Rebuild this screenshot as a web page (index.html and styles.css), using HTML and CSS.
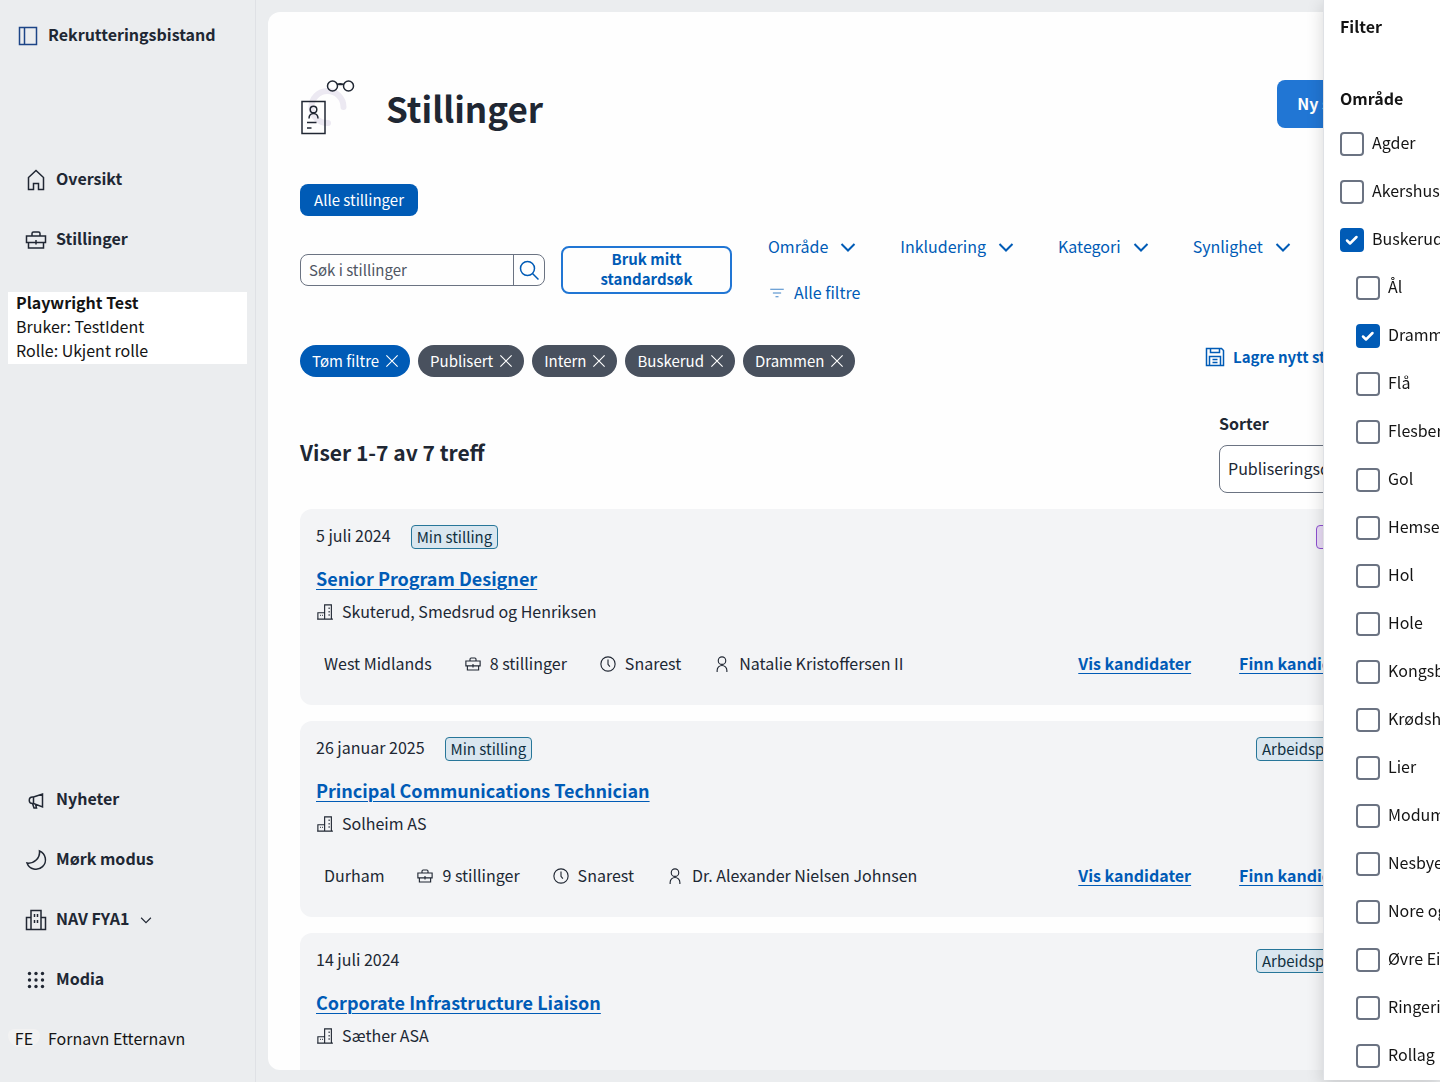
FILE: index.html
```html
<!DOCTYPE html>
<html lang="nb">
<head>
<meta charset="utf-8">
<meta name="viewport" content="width=device-width, initial-scale=1">
<title>Rekrutteringsbistand</title>
<link rel="stylesheet" href="styles.css">
</head>
<body>
<svg class="sprite" aria-hidden="true">
  <symbol id="i-case" viewBox="0 0 24 24"><path d="M2.5 8h19v6.5h-19zM4.5 14.500V20h15v-5.500M8 8V5.500A1.500 1.500 0 0 1 9.500 4h5A1.500 1.500 0 0 1 16 5.500V8M12 12v4.500"/></symbol>
  <symbol id="i-chev" viewBox="0 0 24 24"><path d="M5.500 9l6.500 6.500L18.500 9"/></symbol>
  <symbol id="i-x" viewBox="0 0 24 24"><path d="M4.500 4.500l15 15M19.500 4.500l-15 15"/></symbol>
  <symbol id="i-firm" viewBox="0 0 24 24"><path d="M11.500 13V2.500h9v19h-9M2.500 13h9v8.500h-9zM1.500 21.500h21M17.500 6v2M17.500 10.500v2M17.500 15v2M5.500 16.500h1M8 16.500h1"/></symbol>
  <symbol id="i-clock" viewBox="0 0 24 24"><circle cx="12" cy="12" r="9.500"/><path d="M12 6v6.500l2.500 3"/></symbol>
  <symbol id="i-person" viewBox="0 0 24 24"><circle cx="12" cy="7.500" r="5"/><path d="M5.500 22.500v-2a6.500 6.500 0 0 1 13 0v2"/></symbol>
</svg>

<div class="app">
  <aside class="sidebar">
    <a class="brand" href="#"><svg class="icon24 brand-icon" viewBox="0 0 24 24"><path d="M3.500 3.500h17v17h-17zM8.500 3.500v17"/></svg>Rekrutteringsbistand</a>
    <nav class="nav">
      <a class="nav-item" href="#"><svg class="icon24" viewBox="0 0 24 24"><path d="M4.500 9.500 12 2.500l7.500 7V21.500h-5V15.500h-5v6h-5z"/></svg>Oversikt</a>
      <a class="nav-item" href="#"><svg class="icon24"><use href="#i-case"/></svg>Stillinger</a>
    </nav>
    <div class="user-card"><strong>Playwright Test</strong><span>Bruker: TestIdent</span><span>Rolle: Ukjent rolle</span></div>
    <div class="nav nav-bottom">
      <button class="nav-item" type="button"><svg class="icon24" viewBox="0 0 24 24"><path d="M9.500 9 18.500 6v13L9.500 15.500zM9.500 9H8.500a3 3 0 0 0 0 6.500h1M8.500 15.500l1.500 4.500h2.500l-1-4M9.500 9v6.500"/></svg>Nyheter</button>
      <button class="nav-item" type="button"><svg class="icon24" viewBox="0 0 24 24"><path d="M15.500 3A9.500 9.500 0 1 1 3 15a11 11 0 0 0 12.500-12z"/></svg>Mørk modus</button>
      <button class="nav-item" type="button"><svg class="icon24" viewBox="0 0 24 24"><path d="M7 21.500V2.500h10v19M7 9.500H2.500v12h19v-12H17M10.500 6v3M13.500 6v3M10.500 12v3M13.500 12v3"/></svg>NAV FYA1<svg class="icon18"><use href="#i-chev"/></svg></button>
      <button class="nav-item" type="button"><svg class="icon24" viewBox="0 0 24 24"><g class="dots"><circle cx="5.500" cy="5.500" r="1.700"/><circle cx="12" cy="5.500" r="1.700"/><circle cx="18.500" cy="5.500" r="1.700"/><circle cx="5.500" cy="12" r="1.700"/><circle cx="12" cy="12" r="1.700"/><circle cx="18.500" cy="12" r="1.700"/><circle cx="5.500" cy="18.500" r="1.700"/><circle cx="12" cy="18.500" r="1.700"/><circle cx="18.500" cy="18.500" r="1.700"/></g></svg>Modia</button>
      <div class="profile"><span class="avatar">FE</span>Fornavn Etternavn</div>
    </div>
  </aside>

  <main class="panel">
    <header class="page-head">
      <svg class="hero" viewBox="0 2 56 56"><path class="arc" d="M43.500 29A16 16 0 1 0 28 45"/><rect x="2" y="23.500" width="23" height="32"/><circle cx="13.500" cy="31.500" r="3.300"/><path d="M9 40.500c0-3 2-5 4.500-5s4.500 2 4.500 5M7 44.500h9.500M7 50h4.500"/><circle cx="32.500" cy="8" r="5"/><circle cx="48.500" cy="8" r="5"/><path d="M37 6.500c2-1 4-1 7 0M38.500 6.500h4"/></svg>
      <h1>Stillinger</h1>
      <button class="new-btn" type="button">Ny stilling</button>
    </header>

    <button class="toggle" type="button">Alle stillinger</button>

    <div class="tools">
      <form class="search" role="search">
        <input type="search" placeholder="Søk i stillinger" aria-label="Søk i stillinger">
        <button type="button" aria-label="Søk"><svg class="icon24" viewBox="0 0 24 24"><circle cx="10.500" cy="10.500" r="7"/><path d="M15.500 15.500l6 6"/></svg></button>
      </form>
      <button class="standard" type="button">Bruk mitt standardsøk</button>
      <div class="filters">
        <button type="button">Område<svg class="icon24"><use href="#i-chev"/></svg></button>
        <button type="button">Inkludering<svg class="icon24"><use href="#i-chev"/></svg></button>
        <button type="button">Kategori<svg class="icon24"><use href="#i-chev"/></svg></button>
        <button type="button">Synlighet<svg class="icon24"><use href="#i-chev"/></svg></button>
        <button type="button"><svg class="icon18 thin" viewBox="0 0 24 24"><path d="M3 7h18M6.500 12h11M10 17h4"/></svg>Alle filtre</button>
      </div>
    </div>

    <div class="active">
      <div class="chips">
        <button class="chip chip-clear" type="button">Tøm filtre<svg class="icon18"><use href="#i-x"/></svg></button>
        <button class="chip" type="button">Publisert<svg class="icon18"><use href="#i-x"/></svg></button>
        <button class="chip" type="button">Intern<svg class="icon18"><use href="#i-x"/></svg></button>
        <button class="chip" type="button">Buskerud<svg class="icon18"><use href="#i-x"/></svg></button>
        <button class="chip" type="button">Drammen<svg class="icon18"><use href="#i-x"/></svg></button>
      </div>
      <button class="save" type="button"><svg class="icon24" viewBox="0 0 24 24"><path d="M3.500 3.500h15l2 2v15h-17zM7.500 3.500v4h9v-4M6.500 20.500v-9h11v9M9.500 14.500h5M9.500 17.500h5"/></svg>Lagre nytt standardsøk</button>
    </div>

    <div class="result-head">
      <h2>Viser 1-7 av 7 treff</h2>
      <div class="sort">
        <label for="sort">Sorter</label>
        <select id="sort"><option>Publiseringsdato</option></select>
      </div>
    </div>

    <div class="cards">
      <article class="card">
        <div class="card-top"><span class="date">5 juli 2024</span><span class="tag">Min stilling</span><span class="tag tag-intern">Internt</span></div>
        <h3><a href="#">Senior Program Designer</a></h3>
        <p class="firm"><svg class="icon18"><use href="#i-firm"/></svg>Skuterud, Smedsrud og Henriksen</p>
        <div class="card-foot"><span>West Midlands</span><span><svg class="icon18"><use href="#i-case"/></svg>8 stillinger</span><span><svg class="icon18"><use href="#i-clock"/></svg>Snarest</span><span><svg class="icon18"><use href="#i-person"/></svg>Natalie Kristoffersen II</span><div class="links"><a href="#">Vis kandidater</a><a href="#">Finn kandidater</a></div></div>
      </article>
      <article class="card">
        <div class="card-top"><span class="date">26 januar 2025</span><span class="tag">Min stilling</span><span class="tag tag-end">Arbeidsplassen</span></div>
        <h3><a href="#">Principal Communications Technician</a></h3>
        <p class="firm"><svg class="icon18"><use href="#i-firm"/></svg>Solheim AS</p>
        <div class="card-foot"><span>Durham</span><span><svg class="icon18"><use href="#i-case"/></svg>9 stillinger</span><span><svg class="icon18"><use href="#i-clock"/></svg>Snarest</span><span><svg class="icon18"><use href="#i-person"/></svg>Dr. Alexander Nielsen Johnsen</span><div class="links"><a href="#">Vis kandidater</a><a href="#">Finn kandidater</a></div></div>
      </article>
      <article class="card">
        <div class="card-top"><span class="date">14 juli 2024</span><span class="tag tag-end">Arbeidsplassen</span></div>
        <h3><a href="#">Corporate Infrastructure Liaison</a></h3>
        <p class="firm"><svg class="icon18"><use href="#i-firm"/></svg>Sæther ASA</p>
      </article>
    </div>
  </main>
</div>

<aside class="drawer" aria-label="Filter">
  <h2>Filter</h2>
  <fieldset>
    <legend>Område</legend>
    <label><input type="checkbox">Agder</label>
    <label><input type="checkbox">Akershus</label>
    <label><input type="checkbox" checked>Buskerud</label>
    <div class="sub">
      <label><input type="checkbox">Ål</label>
      <label><input type="checkbox" checked>Drammen</label>
      <label><input type="checkbox">Flå</label>
      <label><input type="checkbox">Flesberg</label>
      <label><input type="checkbox">Gol</label>
      <label><input type="checkbox">Hemsedal</label>
      <label><input type="checkbox">Hol</label>
      <label><input type="checkbox">Hole</label>
      <label><input type="checkbox">Kongsberg</label>
      <label><input type="checkbox">Krødsherad</label>
      <label><input type="checkbox">Lier</label>
      <label><input type="checkbox">Modum</label>
      <label><input type="checkbox">Nesbyen</label>
      <label><input type="checkbox">Nore og Uvdal</label>
      <label><input type="checkbox">Øvre Eiker</label>
      <label><input type="checkbox">Ringerike</label>
      <label><input type="checkbox">Rollag</label>
    </div>
  </fieldset>
</aside>
</body>
</html>
```
FILE: styles.css
```css
:root {
  --ink: #202733;
  --black: #141414;
  --blue: #005bb6;
  --blue-mid: #2176d4;
  --grey: #6b7382;
  --chip: #49515e;
  --page: #ebedef;
}
* { box-sizing: border-box; }
html, body { height: 100%; }
body {
  margin: 0;
  overflow: hidden;
  background: var(--page);
  color: var(--ink);
  font: 16px/24px "Noto Sans CJK JP", "Noto Sans", sans-serif;
}
button, input, select { font: inherit; color: inherit; }
button { border: 0; background: none; padding: 0; cursor: pointer; }
h1, h2, h3, p { margin: 0; }
a { color: inherit; }
svg { flex: none; fill: none; stroke: currentColor; stroke-width: 1.5; }
.sprite { display: none; }
.icon24 { width: 24px; height: 24px; }
.icon18 { width: 18px; height: 18px; }
.dots { fill: currentColor; stroke: none; }

.app { display: flex; height: 100%; }

.sidebar {
  flex: 0 0 256px;
  display: flex;
  flex-direction: column;
  padding: 12px 8px 18px;
  border-right: 1px solid #dfe1e5;
}
/* The text sits slightly above the middle of a row, the icon in the middle. */
.brand, .nav-item, .profile {
  display: flex;
  align-items: center;
  height: 48px;
  gap: 8px;
  padding-bottom: 4px;
}
.brand, .nav-item { font-weight: 700; text-decoration: none; }
.brand svg, .nav-item svg { margin-top: 4px; }
.brand { padding-left: 8px; }
.brand-icon { color: #1c4587; }
.nav { display: flex; flex-direction: column; gap: 12px; padding-left: 16px; margin-top: 96px; }
.user-card {
  display: flex;
  flex-direction: column;
  gap: 4px;
  margin-top: 28px;
  padding: 0 8px 4px;
  background: #fff;
  color: var(--black);
  line-height: 20px;
}
.nav-bottom { margin-top: auto; }
.profile { margin-left: -16px; color: var(--black); }
.avatar {
  display: flex;
  align-items: center;
  justify-content: center;
  width: 32px;
  height: 18px;
  border-radius: 8px 8px 16px 16px;
  background: #f2f2f2;
}

.panel {
  flex: 1;
  min-width: 0;
  overflow: hidden;
  margin: 12px;
  padding: 68px 32px 0;
  border-radius: 12px;
  background: #fefefe;
}
.page-head { display: flex; align-items: flex-start; height: 104px; }
.hero { width: 56px; height: 56px; }
.hero .arc { stroke: #ece9f2; stroke-width: 6; stroke-linecap: round; }
h1 { margin-left: 30px; font-size: 35px; line-height: 56px; }
.new-btn {
  margin-left: auto;
  height: 48px;
  padding: 0 20px 2px;
  border-radius: 8px;
  background: var(--blue-mid);
  color: #fff;
  font-weight: 700;
}
.toggle {
  display: block;
  min-width: 118px;
  height: 32px;
  padding: 0 12px;
  border-radius: 8px;
  background: var(--blue);
  color: #fff;
  font-size: 15px;
}
.tools { display: flex; align-items: center; gap: 16px; margin-top: 8px; }
.search {
  flex: 0 0 245px;
  display: flex;
  height: 32px;
  border: 1px solid var(--grey);
  border-radius: 8px;
  overflow: hidden;
}
.search input { flex: 1; min-width: 0; border: 0; padding: 0 8px; background: none; font-size: 15px; }
.search input::placeholder { color: #4f5663; opacity: 1; }
.search button { width: 31px; border-left: 1px solid var(--grey); color: var(--blue); line-height: 0; }
.standard {
  flex: 0 0 171px;
  height: 48px;
  padding: 0 20px 2px;
  border: 2px solid var(--blue-mid);
  border-radius: 8px;
  color: var(--blue);
  font-size: 15px;
  line-height: 20px;
  font-weight: 700;
}
.filters { flex: 1; display: flex; flex-wrap: wrap; color: var(--blue); }
.filters button { display: flex; align-items: center; gap: 8px; height: 46px; padding: 0 20px 2px; }
.filters svg { margin-top: 2px; stroke-width: 2; }
.filters .thin { stroke-width: 1; }

.active { display: flex; justify-content: space-between; align-items: flex-start; margin-top: 21px; }
.chips { display: flex; gap: 8px; padding-top: 8px; }
.chip {
  display: flex;
  align-items: center;
  gap: 4px;
  height: 32px;
  padding: 0 9px 0 12px;
  border-radius: 16px;
  background: var(--chip);
  color: #fff;
  font-size: 15px;
}
.chip-clear { background: var(--blue); }
.save {
  display: flex;
  align-items: center;
  gap: 6px;
  width: 193px;
  height: 40px;
  color: var(--blue);
  font-size: 15px;
  font-weight: 700;
  white-space: nowrap;
}

.result-head { display: flex; justify-content: space-between; align-items: center; margin-top: 34px; }
h2 { font-size: 21px; line-height: 32px; }
.sort { width: 177px; }
.sort label { display: block; margin-bottom: 10px; font-weight: 700; }
.sort select {
  display: block;
  width: 100%;
  height: 48px;
  padding: 0 8px 2px;
  border: 1px solid var(--grey);
  border-radius: 8px;
  background: #fff;
  appearance: none;
}

.cards { display: flex; flex-direction: column; gap: 16px; margin-top: 16px; }
.card { min-height: 196px; padding: 16px; border-radius: 12px; background: #f3f4f6; }
.card-top { display: flex; gap: 20px; height: 24px; }
.date { line-height: 20px; }
.tag {
  height: 24px;
  padding: 0 5px;
  border: 1px solid #277699;
  border-radius: 4px;
  background: #d9e6ef;
  color: #10303f;
  font-size: 15px;
  line-height: 22px;
}
.tag-intern { min-width: 64px; margin-left: auto; border-color: #8e4fd1; background: #e9dcf6; }
.tag-end { min-width: 124px; margin-left: auto; }
h3 { margin-top: 15px; font-size: 18px; line-height: 28px; }
h3 a, .links a { color: var(--blue); text-underline-offset: 3px; text-decoration-thickness: 1px; }
.card .icon18 { margin-top: 2px; }
.firm { display: flex; align-items: center; gap: 8px; margin-top: 7px; }
.card-foot { display: flex; align-items: center; gap: 32px; margin-top: 28px; padding-left: 8px; }
.card-foot span { display: flex; align-items: center; gap: 8px; }
.links { display: flex; gap: 48px; margin-left: auto; padding-right: 16px; font-weight: 700; }

.drawer {
  position: fixed;
  top: 0;
  right: 0;
  bottom: 2px;
  width: 117px;
  overflow: hidden;
  padding: 10px 0 0 16px;
  border-left: 1px solid #dfe1e5;
  background: #fff;
  color: var(--black);
  white-space: nowrap;
  box-shadow: 0 4px 16px rgb(0 0 0 / 16%);
}
.drawer h2 { font-size: 16px; line-height: 32px; }
.drawer fieldset { margin: 0; padding: 0; border: 0; min-width: 0; }
.drawer legend { padding: 44px 0 10px; font-weight: 700; }
.drawer label { display: flex; align-items: center; gap: 8px; height: 48px; padding-bottom: 4px; }
.sub { padding-left: 16px; }
.drawer input {
  appearance: none;
  flex: none;
  width: 24px;
  height: 24px;
  margin: 4px 0 0;
  border: 2px solid var(--grey);
  border-radius: 4px;
  background: #fff;
}
.drawer input:checked {
  border-color: var(--blue);
  background: var(--blue) url("data:image/svg+xml,%3Csvg xmlns='http://www.w3.org/2000/svg' viewBox='0 0 20 20'%3E%3Cpath d='M5 10.500l3 3 6.500-6.500' fill='none' stroke='white' stroke-width='2.500' stroke-linecap='round' stroke-linejoin='round'/%3E%3C/svg%3E") center / 20px no-repeat;
}
```
